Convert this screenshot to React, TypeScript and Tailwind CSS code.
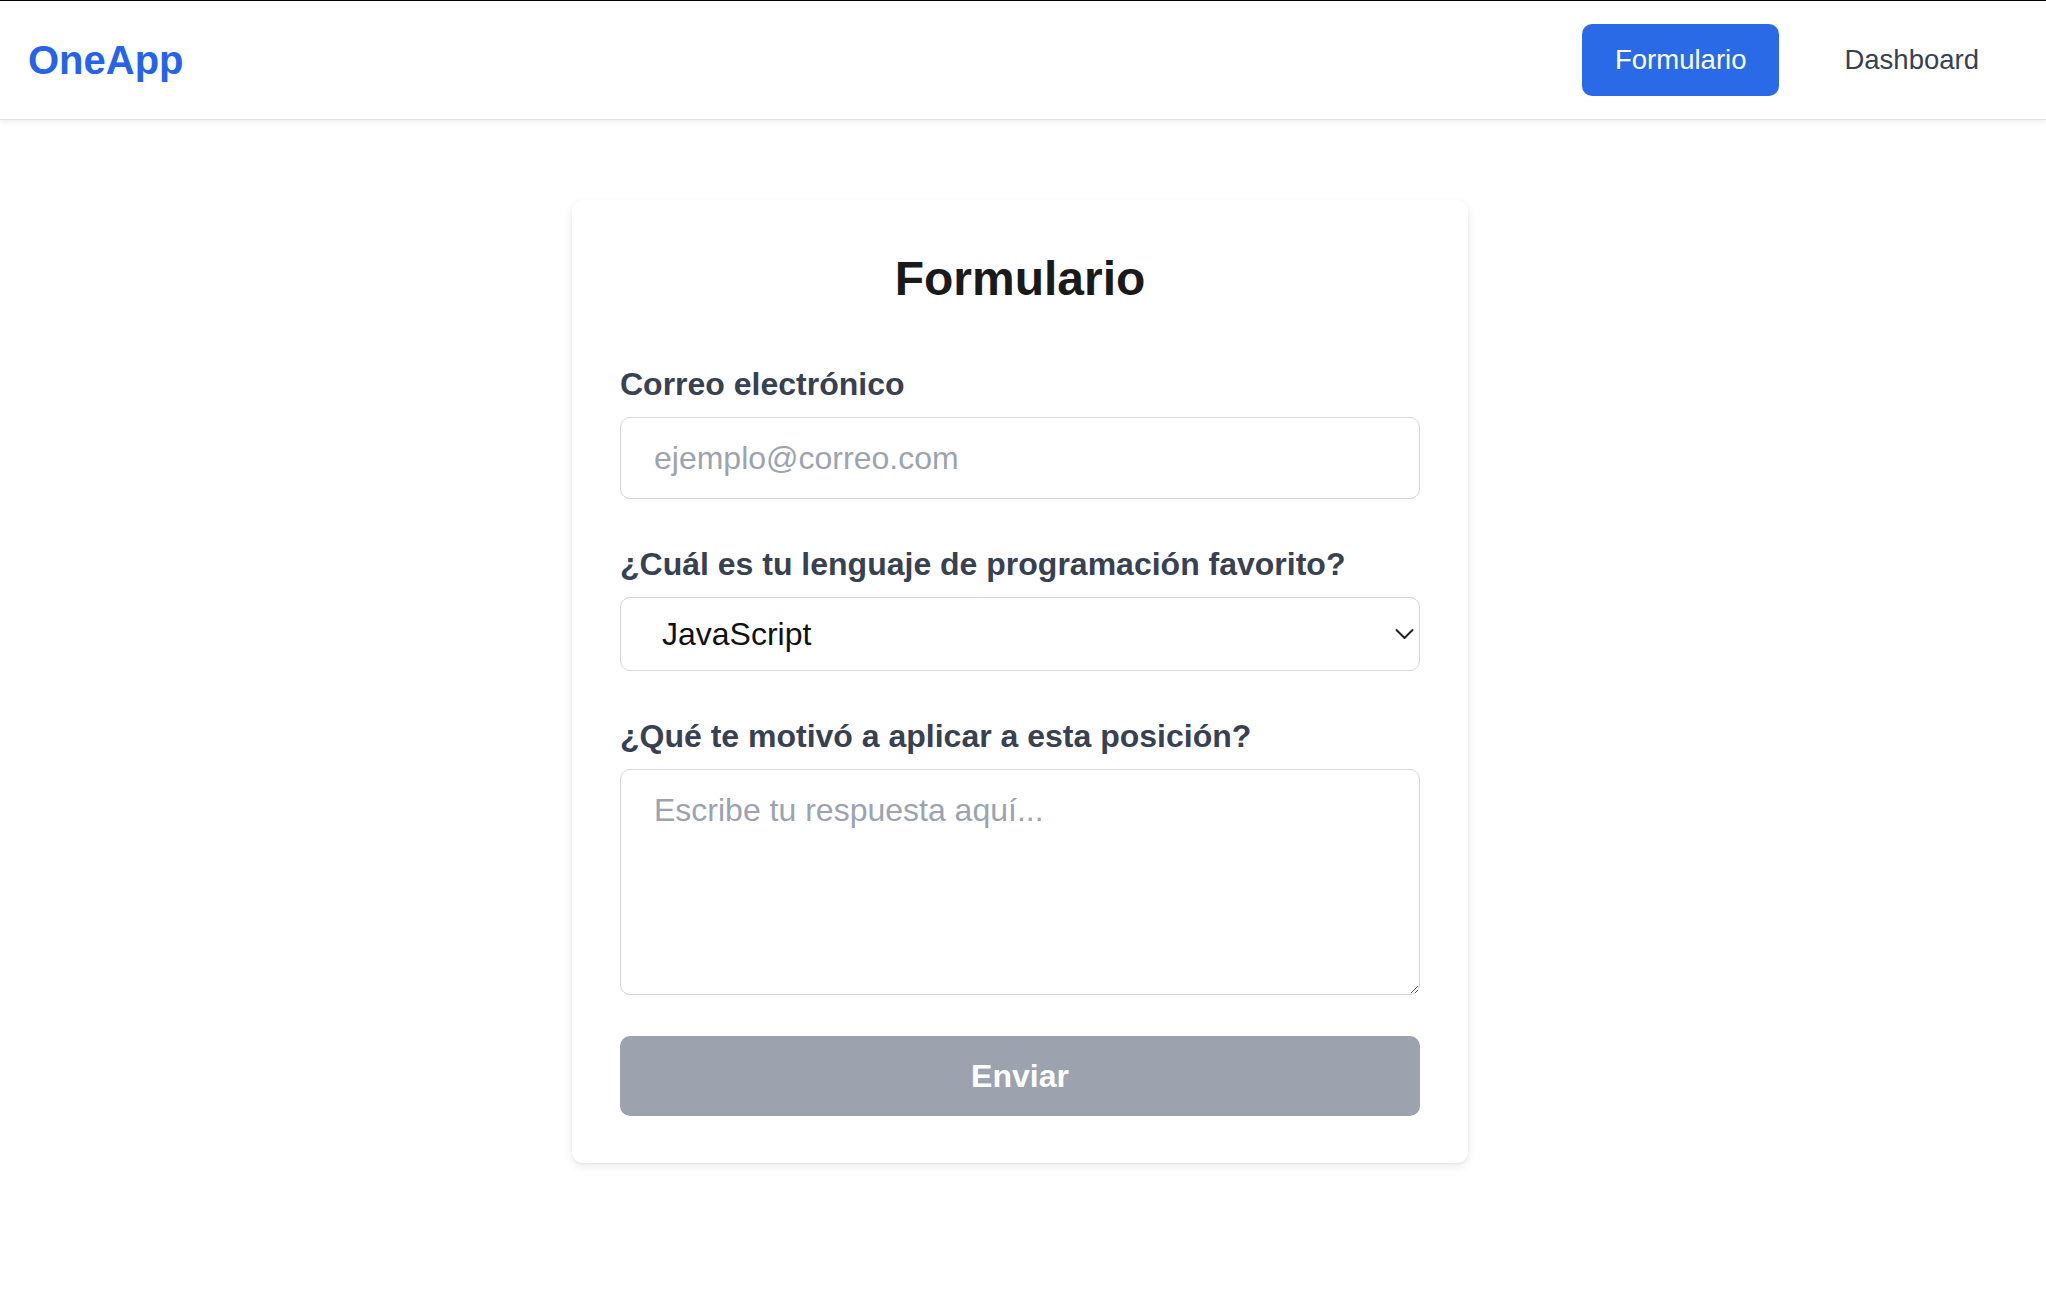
import React from "react";

export default function App() {
  return (
    <div className="min-h-[1294px] bg-white font-['Liberation_Sans',Arial,sans-serif]">
      <header className="flex h-[120px] items-center justify-between border-t border-b border-t-black border-b-[#e0e2e6] bg-white pl-[28px] pr-[34px] shadow-[0_2px_6px_rgba(0,0,0,0.07)]">
        <div className="text-[40px] font-bold leading-none text-[#2563eb]">OneApp</div>
        <nav className="flex items-center gap-[32px]">
          <a className="flex h-[72px] items-center rounded-[10px] bg-[#2b6ae6] px-[33px] text-[27.5px] text-white">
            Formulario
          </a>
          <a className="flex h-[72px] items-center px-[33px] text-[27.5px] text-[#374151]">Dashboard</a>
        </nav>
      </header>

      <main className="flex justify-center pt-[80px] pr-[6px]">
        <div className="w-[896px] rounded-[11px] bg-white px-[48px] pt-[48px] pb-[47px] shadow-[0_4px_10px_rgba(0,0,0,0.08),0_1px_3px_rgba(0,0,0,0.05)]">
          <h1 className="mb-[56px] text-center text-[48px] font-bold leading-[62px] text-[#1a1a1a]">Formulario</h1>

          <div className="-mt-[2px] flex flex-col">
            <label className="mb-[13px] text-[32px] font-bold leading-[40px] text-[#374151]">Correo electrónico</label>
            <input
              type="email"
              placeholder="ejemplo@correo.com"
              className="h-[82px] w-full rounded-[10px] border border-[#d1d5db] bg-white px-[33px] text-[32px] leading-[48px] text-[#111] outline-none placeholder:text-[#9ca3af]"
            />
          </div>

          <div className="mt-[45px] flex flex-col">
            <label className="mb-[13px] text-[32px] font-bold leading-[40px] text-[#374151]">
              ¿Cuál es tu lenguaje de programación favorito?
            </label>
            <div className="relative">
              <select
                defaultValue="JavaScript"
                className="h-[74px] w-full appearance-none rounded-[10px] border border-[#d1d5db] bg-white pl-[41px] pr-[40px] text-[32px] leading-[48px] text-[#111] outline-none"
              >
                <option>JavaScript</option>
                <option>Python</option>
                <option>TypeScript</option>
                <option>Java</option>
              </select>
              <svg
                className="pointer-events-none absolute right-[6px] top-1/2 -translate-y-1/2"
                width="19"
                height="11"
                viewBox="0 0 19 11"
                fill="none"
              >
                <polyline points="1.5,1.5 9.5,9.5 17.5,1.5" stroke="#222" strokeWidth="2" strokeLinecap="round" strokeLinejoin="round" />
              </svg>
            </div>
          </div>

          <div className="mt-[45px] flex flex-col">
            <label className="mb-[13px] text-[32px] font-bold leading-[40px] text-[#374151]">
              ¿Qué te motivó a aplicar a esta posición?
            </label>
            <textarea
              placeholder="Escribe tu respuesta aquí..."
              className="block h-[226px] w-full rounded-[10px] border border-[#d1d5db] bg-white px-[33px] py-[16px] text-[32px] leading-[48px] text-[#111] outline-none placeholder:text-[#9ca3af]"
            />
          </div>

          <button
            type="button"
            className="mt-[41px] flex h-[80px] w-full items-center justify-center rounded-[10px] bg-[#9ca3af] text-[32px] font-bold text-white"
          >
            Enviar
          </button>
        </div>
      </main>
    </div>
  );
}
